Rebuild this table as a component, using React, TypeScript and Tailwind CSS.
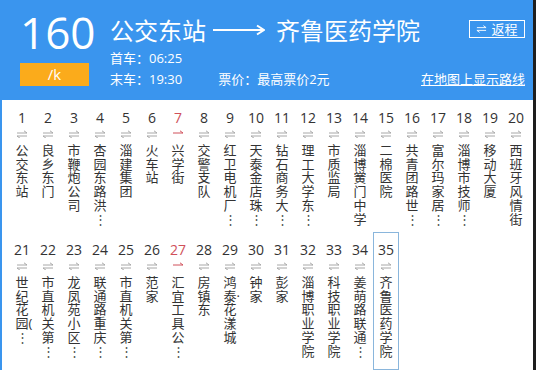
import React from "react";

type Stop = { n: number; name: string; red?: boolean; hl?: boolean };

const row1: Stop[] = [
  { n: 1, name: "公交东站" },
  { n: 2, name: "良乡东门" },
  { n: 3, name: "市鞭炮公司" },
  { n: 4, name: "杏园东路洪…" },
  { n: 5, name: "淄建集团" },
  { n: 6, name: "火车站" },
  { n: 7, name: "兴学街", red: true },
  { n: 8, name: "交警支队" },
  { n: 9, name: "红卫电机厂…" },
  { n: 10, name: "天泰金店珠…" },
  { n: 11, name: "钻石商务大…" },
  { n: 12, name: "理工大学东…" },
  { n: 13, name: "市质监局" },
  { n: 14, name: "淄博黉门中学" },
  { n: 15, name: "二棉医院" },
  { n: 16, name: "共青团路世…" },
  { n: 17, name: "富尔玛家居…" },
  { n: 18, name: "淄博市技师…" },
  { n: 19, name: "移动大厦" },
  { n: 20, name: "西班牙风情街" },
];

const row2: Stop[] = [
  { n: 21, name: "世纪花园(…" },
  { n: 22, name: "市直机关第…" },
  { n: 23, name: "龙凤苑小区…" },
  { n: 24, name: "联通路重庆…" },
  { n: 25, name: "市直机关第…" },
  { n: 26, name: "范家" },
  { n: 27, name: "汇宜工具公…", red: true },
  { n: 28, name: "房镇东" },
  { n: 29, name: "鸿泰·花漾城" },
  { n: 30, name: "钟家" },
  { n: 31, name: "彭家" },
  { n: 32, name: "淄博职业学院" },
  { n: 33, name: "科技职业学院" },
  { n: 34, name: "姜萌路联通…" },
  { n: 35, name: "齐鲁医药学院", hl: true },
];

function split(s: string): string[] {
  const out: string[] = [];
  for (const ch of Array.from(s)) {
    if ((ch === "(" || ch === "·") && out.length) out[out.length - 1] += ch;
    else out.push(ch === "…" ? "⋮" : ch);
  }
  return out;
}

function Harpoons({ red }: { red?: boolean }) {
  if (red) {
    return (
      <svg width="12" height="8" viewBox="0 0 12 8" fill="none">
        <path d="M1 3H11L8 0.8" stroke="#d0505a" strokeWidth="1" />
      </svg>
    );
  }
  return (
    <svg width="12" height="8" viewBox="0 0 12 8" fill="none">
      <path d="M1 3H11L8 0.8" stroke="#a8a8a8" strokeWidth="1" />
      <path d="M11 6H1L4 8.2" stroke="#a8a8a8" strokeWidth="1" />
    </svg>
  );
}

function Cell({ s, tall }: { s: Stop; tall?: boolean }) {
  return (
    <div
      className={
        "flex flex-col items-center w-[26px] pt-[9px] " +
        (tall ? "h-[138px] " : "h-[132px] ") +
        (s.hl ? "ring-1 ring-inset ring-[#8ab6dc]" : "")
      }
    >
      <div
        className={
          "h-[17px] leading-[17px] text-[14px] " +
          (s.red ? "text-[#d0505a]" : "text-[#333333]")
        }
      >
        {s.n}
      </div>
      <div className="h-[16px] flex items-center justify-center">
        <Harpoons red={s.red} />
      </div>
      <div className="w-[13px] pt-[2px] text-[13px] leading-[13.7px] whitespace-nowrap text-left text-[#333333]">
        {split(s.name).map((c, i) => (
          <div key={i} className={c === "⋮" ? "text-[#555555]" : ""}>
            {c}
          </div>
        ))}
      </div>
    </div>
  );
}

export default function App() {
  return (
    <div
      className="w-[536px] h-[370px] overflow-hidden bg-white border-r-[3px] border-[#1e1e1e]"
      style={{ fontFamily: '"Open Sans", "Noto Sans CJK SC", sans-serif' }}
    >
      <div className="h-[100px] bg-[#3a95ee] flex pl-[20px] pr-[8px] text-white">
        <div className="w-[69px] pt-[10px] flex flex-col">
          <div className="h-[44px] leading-[44px] text-[44px] text-center">160</div>
          <div className="mt-[9px] h-[23px] bg-[#fbab1b] flex items-center justify-center text-[15px] leading-none">
            /k
          </div>
        </div>
        <div className="flex-1 ml-[21px] pt-[15px] flex flex-col">
          <div className="h-[32px] flex justify-between">
            <div className="flex items-center text-[24px] leading-[32px]">
              <span>公交东站</span>
              <svg width="52" height="12" viewBox="0 0 52 12" className="ml-[7px] mr-[11px] mt-[-2px]">
                <path d="M0 6H50" stroke="white" strokeWidth="2" />
                <path d="M44 1.5L51 6L44 10.5" stroke="white" strokeWidth="2" fill="none" />
              </svg>
              <span>齐鲁医药学院</span>
            </div>
            <div className="mt-[5px] h-[18px] w-[56px] border border-white flex items-center justify-center gap-[4px] text-[13px] leading-none">
              <svg width="11" height="8" viewBox="0 0 12 8" fill="none">
                <path d="M1 2.5H11L8 0.3" stroke="white" strokeWidth="1" />
                <path d="M11 5.5H1L4 7.7" stroke="white" strokeWidth="1" />
              </svg>
              <span>返程</span>
            </div>
          </div>
          <div className="mt-[1px] h-[21px] leading-[21px] text-[13px]">首车：06:25</div>
          <div className="h-[21px] leading-[21px] text-[13px] flex justify-between">
            <div className="flex">
              <span>末车：19:30</span>
              <span className="ml-[36px]">票价：最高票价2元</span>
            </div>
            <span className="underline">在地图上显示路线</span>
          </div>
        </div>
      </div>
      <div className="border-l-[2px] border-[#3a95ee] pl-[7px] h-[270px]">
        <div className="flex">
          {row1.map((s) => (
            <Cell key={s.n} s={s} />
          ))}
        </div>
        <div className="flex">
          {row2.map((s) => (
            <Cell key={s.n} s={s} tall />
          ))}
        </div>
      </div>
    </div>
  );
}
